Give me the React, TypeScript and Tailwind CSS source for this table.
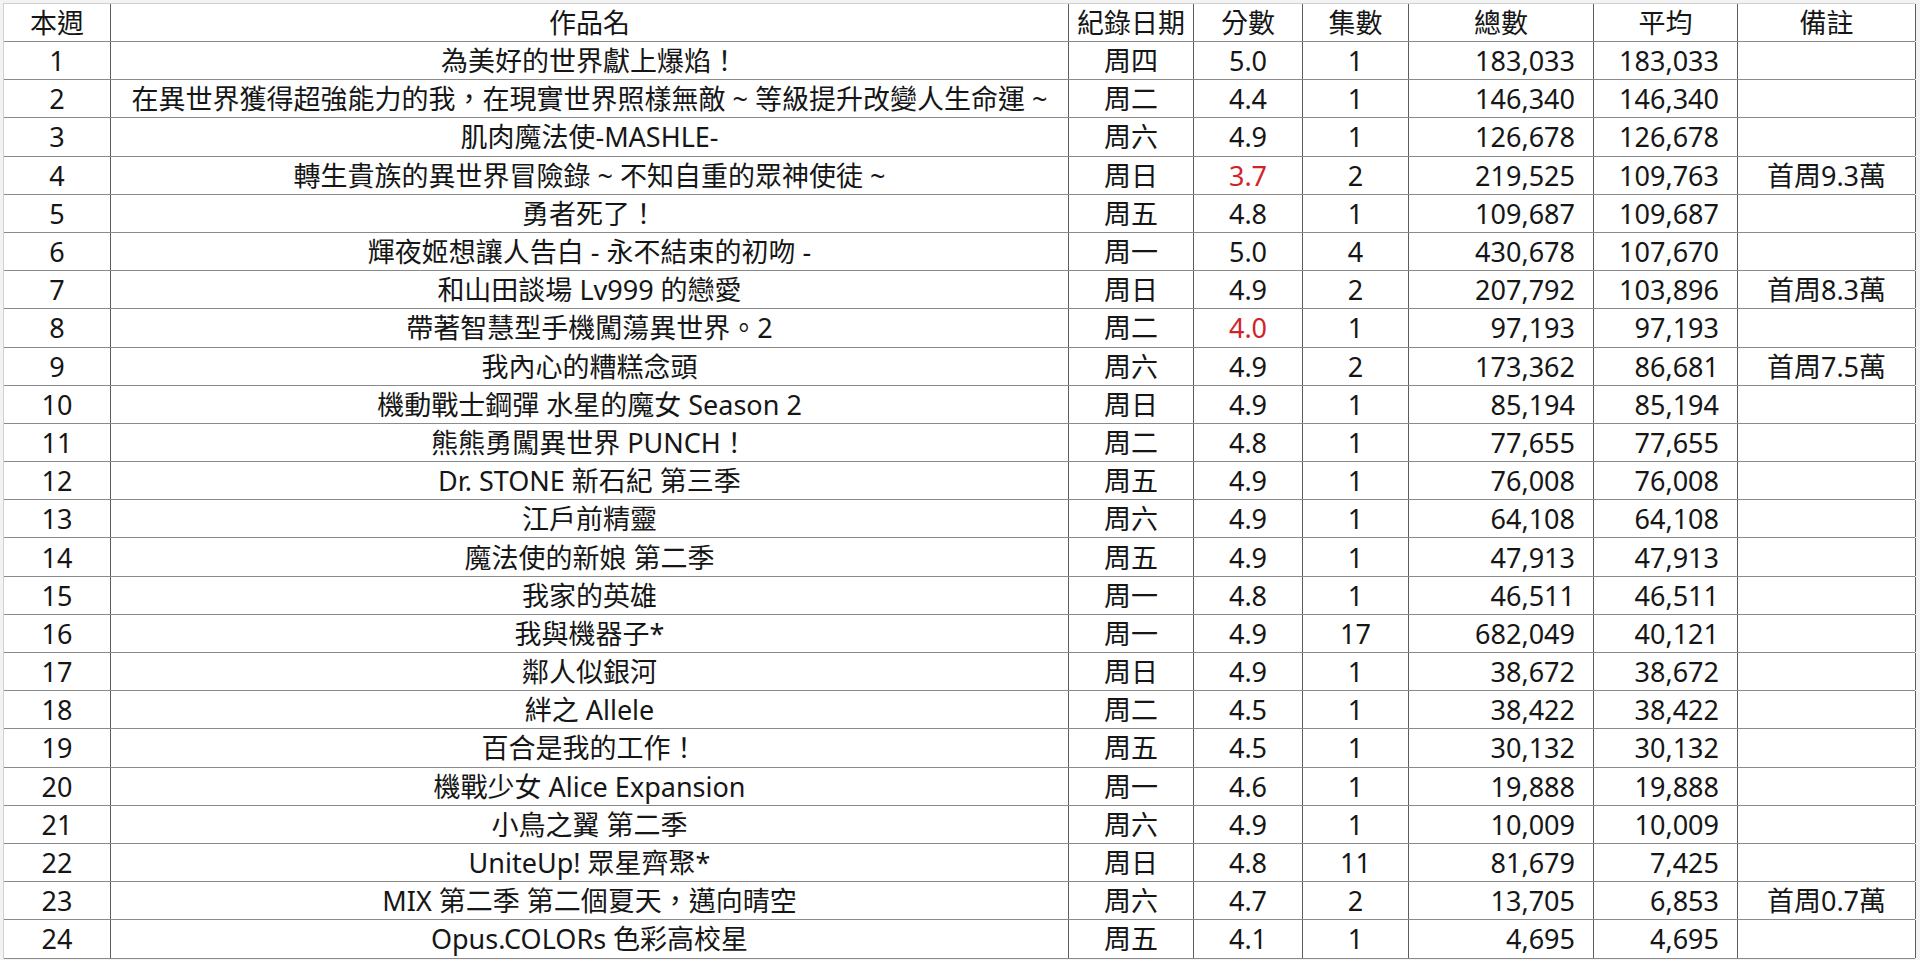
import * as React from "react";

type Row = {
  rank: number;
  title: string;
  day: string;
  score: string;
  low?: boolean;
  eps: number;
  total: string;
  avg: string;
  note?: string;
};

const rows: Row[] = [
  { rank: 1, title: "為美好的世界獻上爆焰！", day: "周四", score: "5.0", eps: 1, total: "183,033", avg: "183,033" },
  { rank: 2, title: "在異世界獲得超強能力的我，在現實世界照樣無敵 ~ 等級提升改變人生命運 ~", day: "周二", score: "4.4", eps: 1, total: "146,340", avg: "146,340" },
  { rank: 3, title: "肌肉魔法使-MASHLE-", day: "周六", score: "4.9", eps: 1, total: "126,678", avg: "126,678" },
  { rank: 4, title: "轉生貴族的異世界冒險錄 ~ 不知自重的眾神使徒 ~", day: "周日", score: "3.7", low: true, eps: 2, total: "219,525", avg: "109,763", note: "首周9.3萬" },
  { rank: 5, title: "勇者死了！", day: "周五", score: "4.8", eps: 1, total: "109,687", avg: "109,687" },
  { rank: 6, title: "輝夜姬想讓人告白 - 永不結束的初吻 -", day: "周一", score: "5.0", eps: 4, total: "430,678", avg: "107,670" },
  { rank: 7, title: "和山田談場 Lv999 的戀愛", day: "周日", score: "4.9", eps: 2, total: "207,792", avg: "103,896", note: "首周8.3萬" },
  { rank: 8, title: "帶著智慧型手機闖蕩異世界。2", day: "周二", score: "4.0", low: true, eps: 1, total: "97,193", avg: "97,193" },
  { rank: 9, title: "我內心的糟糕念頭", day: "周六", score: "4.9", eps: 2, total: "173,362", avg: "86,681", note: "首周7.5萬" },
  { rank: 10, title: "機動戰士鋼彈 水星的魔女 Season 2", day: "周日", score: "4.9", eps: 1, total: "85,194", avg: "85,194" },
  { rank: 11, title: "熊熊勇闖異世界 PUNCH！", day: "周二", score: "4.8", eps: 1, total: "77,655", avg: "77,655" },
  { rank: 12, title: "Dr. STONE 新石紀 第三季", day: "周五", score: "4.9", eps: 1, total: "76,008", avg: "76,008" },
  { rank: 13, title: "江戶前精靈", day: "周六", score: "4.9", eps: 1, total: "64,108", avg: "64,108" },
  { rank: 14, title: "魔法使的新娘 第二季", day: "周五", score: "4.9", eps: 1, total: "47,913", avg: "47,913" },
  { rank: 15, title: "我家的英雄", day: "周一", score: "4.8", eps: 1, total: "46,511", avg: "46,511" },
  { rank: 16, title: "我與機器子*", day: "周一", score: "4.9", eps: 17, total: "682,049", avg: "40,121" },
  { rank: 17, title: "鄰人似銀河", day: "周日", score: "4.9", eps: 1, total: "38,672", avg: "38,672" },
  { rank: 18, title: "絆之 Allele", day: "周二", score: "4.5", eps: 1, total: "38,422", avg: "38,422" },
  { rank: 19, title: "百合是我的工作！", day: "周五", score: "4.5", eps: 1, total: "30,132", avg: "30,132" },
  { rank: 20, title: "機戰少女 Alice Expansion", day: "周一", score: "4.6", eps: 1, total: "19,888", avg: "19,888" },
  { rank: 21, title: "小鳥之翼 第二季", day: "周六", score: "4.9", eps: 1, total: "10,009", avg: "10,009" },
  { rank: 22, title: "UniteUp! 眾星齊聚*", day: "周日", score: "4.8", eps: 11, total: "81,679", avg: "7,425" },
  { rank: 23, title: "MIX 第二季 第二個夏天，邁向晴空", day: "周六", score: "4.7", eps: 2, total: "13,705", avg: "6,853", note: "首周0.7萬" },
  { rank: 24, title: "Opus.COLORs 色彩高校星", day: "周五", score: "4.1", eps: 1, total: "4,695", avg: "4,695" },
];

const cols = "grid grid-cols-[107px_958px_125px_109px_106px_185px_144px_178px]";
const cell = "flex items-center justify-center border-r border-[#5c5c5c] whitespace-nowrap";
const num = "flex items-center justify-end pr-[18px] border-r border-[#5c5c5c]";

export default function App() {
  return (
    <div
      lang="zh-Hant"
      className="h-[960px] w-[1920px] overflow-hidden bg-[#f3f3f3] pl-[3px] pt-[3px] text-[27px] leading-none text-[#161616]"
      style={{ fontFamily: '"Noto Sans", "Noto Sans CJK TC", sans-serif' }}
    >
      <div className="w-[1912px] bg-white border-l border-t border-[#d0d0d0]">
        {/* header */}
        <div className={`${cols} h-[38px] border-b border-[#8a8a8a]`}>
          <div className={cell}>本週</div>
          <div className={cell}>作品名</div>
          <div className={cell}>紀錄日期</div>
          <div className={cell}>分數</div>
          <div className={cell}>集數</div>
          <div className={cell}>總數</div>
          <div className={cell}>平均</div>
          <div className={cell}>備註</div>
        </div>
        {rows.map((r) => (
          <div key={r.rank} className={`${cols} h-[38.2px] border-b border-[#8a8a8a]`}>
            <div className={cell}>{r.rank}</div>
            <div className={cell}>{r.title}</div>
            <div className={cell}>{r.day}</div>
            <div className={`${cell} ${r.low ? "text-[#d0242a]" : ""}`}>{r.score}</div>
            <div className={cell}>{r.eps}</div>
            <div className={num}>{r.total}</div>
            <div className={num}>{r.avg}</div>
            <div className={cell}>{r.note ?? ""}</div>
          </div>
        ))}
      </div>
    </div>
  );
}
